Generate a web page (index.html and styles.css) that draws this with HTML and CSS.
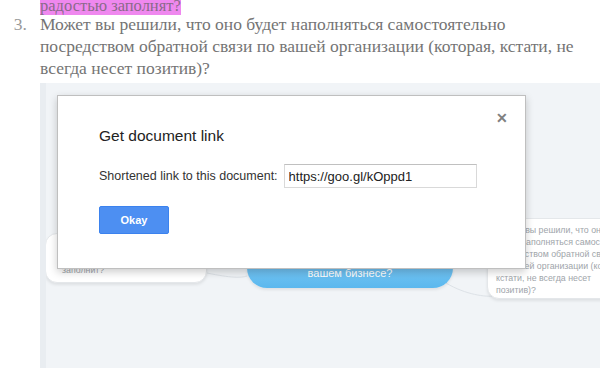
FILE: index.html
```html
<!DOCTYPE html>
<html lang="ru">

<head>
    <meta charset="UTF-8">
    <title>Заметка</title>
    <link rel="stylesheet" href="styles.css">
</head>

<body>
    <div class="article">
        <p class="prev"><span class="mark">радостью заполнят?</span></p>
        <ol class="questions" start="3">
            <li>Может вы решили, что оно будет наполняться самостоятельно посредством обратной связи по вашей организации (которая, кстати, не всегда несет позитив)?</li>
        </ol>

        <div class="shot">
            <div class="map">
                <svg class="links" width="560" height="285">
                    <path d="M161 190 C 185 195, 195 195, 201 193" />
                    <path d="M400 200 C 420 212, 440 214, 448 213" />
                </svg>
                <div class="node node-left">заполнит?</div>
                <div class="node node-main">вашем бизнесе?</div>
                <div class="node node-right">Может вы решили, что оно<br>будет наполняться самостоятельно<br>посредством обратной связи<br>по вашей организации (которая,<br>кстати, не всегда несет<br>позитив)?</div>
            </div>

            <div class="dialog">
                <span class="close">&#x2715;</span>
                <h2 class="dialog-title">Get document link</h2>
                <div class="dialog-row">
                    <label for="short-link">Shortened link to this document:</label>
                    <input id="short-link" type="text" value="https://goo.gl/kOppd1">
                </div>
                <button class="okay">Okay</button>
            </div>
        </div>
    </div>
</body>

</html>
```

FILE: styles.css
```css
body {
    margin: 0;
    font-family: "Liberation Serif", serif;
    color: #747474;
    overflow: hidden;
}

.article {
    padding-left: 40px;
}

.prev {
    margin: -5px 0 0;
    font-size: 16.5px;
    line-height: 22px;
}

.mark {
    background-color: #ef88ef;
    color: #8a6a8a;
}

.questions {
    margin: -4px 0 0;
    padding-left: 0;
    width: 540px;
    font-size: 17.5px;
    line-height: 22px;
}

.questions li::marker {
    content: "3.\00a0\00a0\00a0";
    color: #999;
}

.shot {
    position: relative;
    margin-top: 4px;
    height: 285px;
    background-color: #f1f4f7;
    border-left: 6px solid #e9edf1;
    font-family: Arial, "Liberation Sans", sans-serif;
}

.map {
    position: absolute;
    inset: 0;
    overflow: hidden;
}

.links {
    position: absolute;
    left: 0;
    top: 0;
}

.links path {
    fill: none;
    stroke: #dde2e7;
    stroke-width: 1;
}

.node {
    position: absolute;
    box-sizing: border-box;
    font-size: 8.8px;
    line-height: 12px;
    color: #a0a5aa;
    background-color: #fff;
    border: 1px solid #e4e7ea;
    border-radius: 12px;
    box-shadow: 0 2px 3px rgba(0, 0, 0, 0.08);
    white-space: nowrap;
}

.node-left {
    left: -1px;
    top: 150px;
    width: 162px;
    height: 50px;
    padding: 30px 0 0 16px;
}

.node-main {
    left: 201px;
    top: 160px;
    width: 206px;
    height: 45px;
    padding-top: 24px;
    text-align: center;
    font-size: 11px;
    color: #fff;
    border: none;
    border-radius: 20px;
    background: linear-gradient(#8ed1f8, #5bb8ee);
}

.node-right {
    left: 441px;
    top: 135px;
    width: 160px;
    height: 81px;
    padding: 5px 0 0 8px;
}

.dialog {
    position: absolute;
    left: 11px;
    top: 12px;
    width: 469px;
    height: 174px;
    box-sizing: border-box;
    padding: 30px 0 0 41px;
    background-color: #fff;
    border: 1px solid #bfbfbf;
    box-shadow: 0 3px 8px rgba(0, 0, 0, 0.2);
    color: #333;
}

.close {
    position: absolute;
    right: 17px;
    top: 14px;
    font-size: 14px;
    font-weight: bold;
    color: #808080;
}

.dialog-title {
    margin: 0;
    font-size: 15.5px;
    font-weight: normal;
    line-height: 20px;
    color: #222;
}

.dialog-row {
    display: flex;
    align-items: center;
    gap: 6px;
    margin-top: 18px;
    font-size: 12.5px;
}

.dialog-row input {
    width: 193px;
    height: 24px;
    box-sizing: border-box;
    padding: 0 4px;
    border: 1px solid #d9d9d9;
    border-top-color: #c0c0c0;
    font-family: Arial, "Liberation Sans", sans-serif;
    font-size: 13px;
    color: #222;
}

.okay {
    display: block;
    margin-top: 18px;
    width: 70px;
    height: 28px;
    border: 1px solid #3b82ee;
    border-radius: 2px;
    background-color: #4d8ff2;
    color: #fff;
    font-family: Arial, "Liberation Sans", sans-serif;
    font-size: 11px;
    font-weight: bold;
}
```
